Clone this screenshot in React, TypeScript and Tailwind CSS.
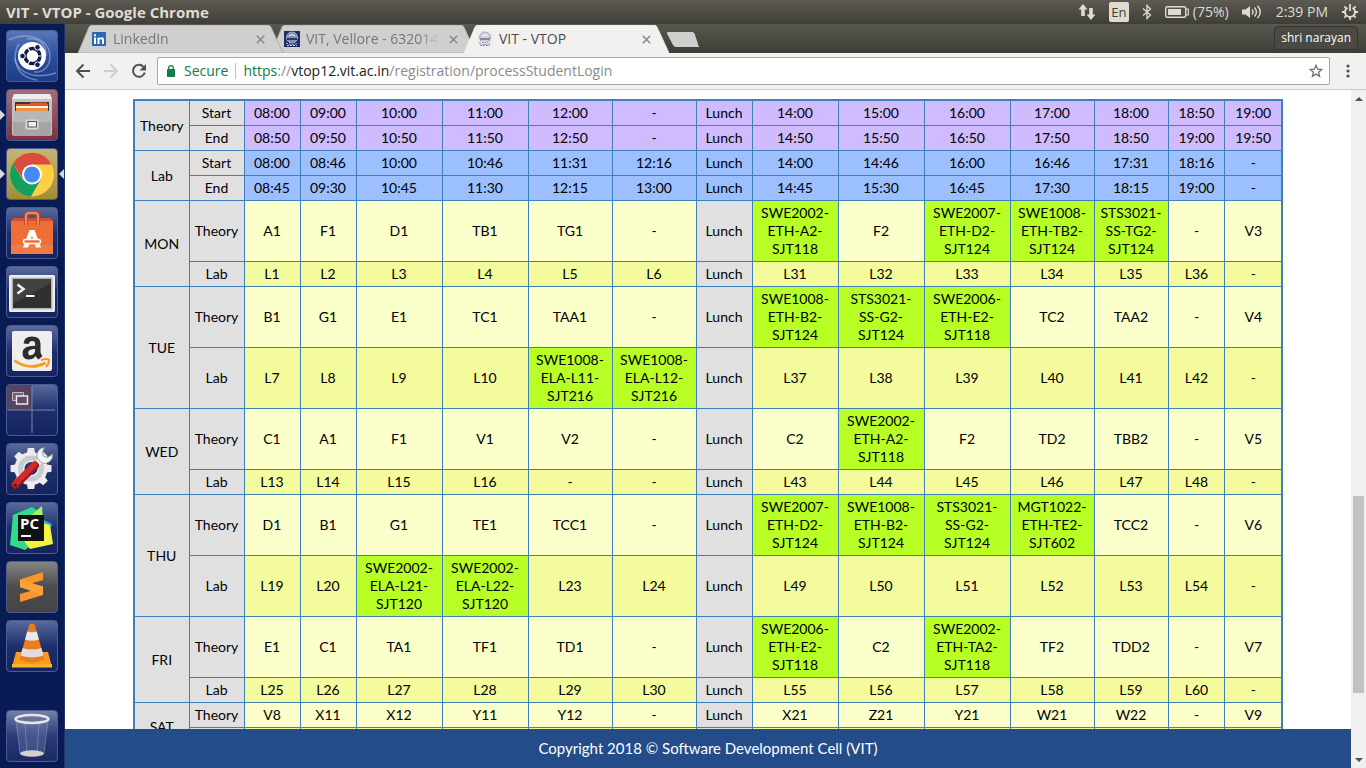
import React from 'react';

const UI = "font-['Open_Sans','Noto_Sans',sans-serif]";

type Slot = { text: string; booked?: boolean };

const parse = (row: string): Slot[] =>
  row.split(' ').map((text) => ({ text, booked: text.length > 8 }));

const BLANK_ROW = ' '.repeat(13);

const COLS = [55, 55, 56, 56, 86, 86, 84, 84, 56, 86, 86, 86, 84, 74, 57, 57];

const HEAD = [
  {
    name: 'Theory',
    tone: 'bg-[#cfbbff]',
    start: '08:00 09:00 10:00 11:00 12:00 - Lunch 14:00 15:00 16:00 17:00 18:00 18:50 19:00',
    end: '08:50 09:50 10:50 11:50 12:50 - Lunch 14:50 15:50 16:50 17:50 18:50 19:00 19:50',
  },
  {
    name: 'Lab',
    tone: 'bg-[#9cbfff]',
    start: '08:00 08:46 10:00 10:46 11:31 12:16 Lunch 14:00 14:46 16:00 16:46 17:31 18:16 -',
    end: '08:45 09:30 10:45 11:30 12:15 13:00 Lunch 14:45 15:30 16:45 17:30 18:15 19:00 -',
  },
];

const DAYS = [
  {
    name: 'MON',
    theory: 'A1 F1 D1 TB1 TG1 - Lunch SWE2002-ETH-A2-SJT118 F2 SWE2007-ETH-D2-SJT124 SWE1008-ETH-TB2-SJT124 STS3021-SS-TG2-SJT124 - V3',
    lab: 'L1 L2 L3 L4 L5 L6 Lunch L31 L32 L33 L34 L35 L36 -',
  },
  {
    name: 'TUE',
    theory: 'B1 G1 E1 TC1 TAA1 - Lunch SWE1008-ETH-B2-SJT124 STS3021-SS-G2-SJT124 SWE2006-ETH-E2-SJT118 TC2 TAA2 - V4',
    lab: 'L7 L8 L9 L10 SWE1008-ELA-L11-SJT216 SWE1008-ELA-L12-SJT216 Lunch L37 L38 L39 L40 L41 L42 -',
  },
  {
    name: 'WED',
    theory: 'C1 A1 F1 V1 V2 - Lunch C2 SWE2002-ETH-A2-SJT118 F2 TD2 TBB2 - V5',
    lab: 'L13 L14 L15 L16 - - Lunch L43 L44 L45 L46 L47 L48 -',
  },
  {
    name: 'THU',
    theory: 'D1 B1 G1 TE1 TCC1 - Lunch SWE2007-ETH-D2-SJT124 SWE1008-ETH-B2-SJT124 STS3021-SS-G2-SJT124 MGT1022-ETH-TE2-SJT602 TCC2 - V6',
    lab: 'L19 L20 SWE2002-ELA-L21-SJT120 SWE2002-ELA-L22-SJT120 L23 L24 Lunch L49 L50 L51 L52 L53 L54 -',
  },
  {
    name: 'FRI',
    theory: 'E1 C1 TA1 TF1 TD1 - Lunch SWE2006-ETH-E2-SJT118 C2 SWE2002-ETH-TA2-SJT118 TF2 TDD2 - V7',
    lab: 'L25 L26 L27 L28 L29 L30 Lunch L55 L56 L57 L58 L59 L60 -',
  },
  {
    name: 'SAT',
    theory: 'V8 X11 X12 Y11 Y12 - Lunch X21 Z21 Y21 W21 W22 - V9',
    lab: BLANK_ROW,
  },
];

const CELL = 'border border-[#3f7fbc] px-1 py-[3px] font-normal';

function Label({ text, span }: { text: string; span?: number }) {
  return (
    <th rowSpan={span} className={`${CELL} bg-[#e0e0e0]`}>
      {text}
    </th>
  );
}

function Slots({ row, tone, grayLunch }: { row: string; tone: string; grayLunch?: boolean }) {
  return (
    <>
      {parse(row).map((s, i) => {
        const bg = s.booked ? 'bg-[#b7ff24]' : grayLunch && i === 6 ? 'bg-[#e0e0e0]' : tone;
        const parts = s.text.split('-');
        return (
          <td key={i} className={`${CELL} ${bg}`}>
            {s.booked ? (
              <>
                {parts[0]}-<br />
                {parts[1]}-{parts[2]}-<br />
                {parts[3]}
              </>
            ) : (
              s.text
            )}
          </td>
        );
      })}
    </>
  );
}

function Timetable() {
  return (
    <table className="w-full table-fixed border-collapse border-2 border-[#3f7fbc] text-center text-sm/[18px] text-black">
      <colgroup>
        {COLS.map((w, i) => (
          <col key={i} style={{ width: `${(w / 1148) * 100}%` }} />
        ))}
      </colgroup>
      <tbody>
        {HEAD.map((h) => (
          <React.Fragment key={h.name}>
            <tr>
              <Label text={h.name} span={2} />
              <Label text="Start" />
              <Slots row={h.start} tone={h.tone} />
            </tr>
            <tr>
              <Label text="End" />
              <Slots row={h.end} tone={h.tone} />
            </tr>
          </React.Fragment>
        ))}
        {DAYS.map((d) => (
          <React.Fragment key={d.name}>
            <tr>
              <Label text={d.name} span={2} />
              <Label text="Theory" />
              <Slots row={d.theory} tone="bg-[#fbffc9]" grayLunch />
            </tr>
            <tr className="h-[25px]">
              <Label text={d.lab === BLANK_ROW ? '' : 'Lab'} />
              <Slots row={d.lab} tone="bg-[#f3fb9d]" grayLunch />
            </tr>
          </React.Fragment>
        ))}
      </tbody>
    </table>
  );
}

/* ---------- top panel ---------- */

function Panel() {
  return (
    <header className="flex h-6 shrink-0 items-center justify-between bg-linear-to-b from-[#5d5b53] to-[#3f3e39] pr-2 pl-[6px] text-[#dfdbd2]">
      <h1 className="text-[15px] font-bold">VIT - VTOP - Google Chrome</h1>
      <div className="flex items-center gap-[13px] text-sm">
        <svg width="18" height="16" viewBox="0 0 18 16" fill="#dfdbd2" aria-label="Network">
          <path d="M5 0 9.500 5.500H6.800V12H3.200V5.500H.500zM13 16 8.500 10.500H11.200V4H14.800V10.500H17.500z" />
        </svg>
        <span className="flex size-5 items-center justify-center rounded-xs bg-[#dfdbd2] text-[13px] text-[#3f3e39]">En</span>
        <svg width="10" height="16" viewBox="0 0 10 16" fill="none" stroke="#dfdbd2" strokeWidth="1.300" aria-label="Bluetooth">
          <path d="M1 4.500 8.500 11 5 14.500V1.500L8.500 5 1 11.500" />
        </svg>
        <span className="flex items-center gap-1">
          <svg width="24" height="12" viewBox="0 0 24 12" aria-label="Battery">
            <rect x=".7" y=".7" width="20" height="10.600" rx="1.500" fill="none" stroke="#dfdbd2" strokeWidth="1.400" />
            <rect x="3" y="3" width="13" height="6" fill="#dfdbd2" />
            <path d="M21 3h2.300v6H21" fill="none" stroke="#dfdbd2" strokeWidth="1.200" />
          </svg>
          (75%)
        </span>
        <svg width="20" height="14" viewBox="0 0 20 14" aria-label="Volume">
          <path d="M0 4.500h3.500L8 1v12L3.500 9.500H0z" fill="#dfdbd2" />
          <path d="M10 4.500q2 2.500 0 5M12.500 2.500q4 4.500 0 9M15.500.8q5.500 6.200 0 12.400" fill="none" stroke="#dfdbd2" strokeWidth="1.400" />
        </svg>
        <time className="px-px">2:39 PM</time>
        <svg width="16" height="16" viewBox="0 0 16 16" fill="none" stroke="#dfdbd2" aria-label="Session">
          <path d="M5.500 3.700a5 5 0 1 0 5 0" strokeWidth="1.900" />
          <path d="M8 0v7" strokeWidth="1.800" />
          <path d="M0 8h3M13 8h3M8 13v3M2.300 2.300l2 2M13.700 2.300l-2 2M2.300 13.700l2-2M13.700 13.700l-2-2" strokeWidth="1.800" />
        </svg>
      </div>
    </header>
  );
}

/* ---------- launcher ---------- */

const gloss = 'bg-linear-to-b from-[#5b6a9b] via-[#1e2f6d] to-[#15245f]';

function Tile({ label, tone, children, left, right }: { label: string; tone: string; children: React.ReactNode; left?: boolean; right?: boolean }) {
  return (
    <div className="relative flex w-full justify-center">
      {left && <span className="absolute top-[21px] left-0 border-y-[5px] border-l-[5px] border-y-transparent border-l-[#d8dade]" />}
      <button aria-label={label} className={`size-[52px] overflow-hidden rounded-sm border border-[#4c5c92] ${tone}`}>
        <svg width="50" height="50" viewBox="0 0 50 50">{children}</svg>
      </button>
      {right && <span className="absolute top-[21px] right-0 border-y-[5px] border-r-[5px] border-y-transparent border-r-[#d8dade]" />}
    </div>
  );
}

function GearTeeth() {
  return (
    <g fill="#ececec">
      {[0, 45, 90, 135, 180, 225, 270, 315].map((a) => (
        <path key={a} d="M19.500 12 20.800 4H27.200L28.500 12z" transform={`rotate(${a} 24 24.500)`} />
      ))}
    </g>
  );
}

function Launcher() {
  return (
    <nav aria-label="Launcher" className="flex w-[65px] shrink-0 flex-col gap-[7px] border-r border-[#24326a] bg-[#091b55] pt-[6px] pb-[6px]">
      <Tile label="Search" tone="bg-linear-to-b from-[#5a78b8] via-[#2b4f9d] to-[#1d3d88]">
        <g fill="none" stroke="#b6c6e8" strokeOpacity=".5" strokeWidth="1.500">
          <path d="M2 9C20 0 42 7 43 25 43 36 36 42 27 41" />
          <path d="M30 49C8 46 4 26 12 13" />
          <path d="M49 42C22 50 9 38 8 27" />
          <path d="M20 8C34 6 40 16 39 25" />
        </g>
        <circle cx="25" cy="25" r="14" fill="#fff" />
        <circle cx="25.500" cy="25" r="7.500" fill="none" stroke="#101b4a" strokeWidth="3.400" />
        <path d="M25.500 25 19 36.300M25.500 25 19 13.700M25.500 25H38" stroke="#fff" strokeWidth="1.200" />
        <circle cx="25.500" cy="25" r="5.600" fill="#fff" />
        <g fill="#101b4a" stroke="#fff" strokeWidth="1">
          <circle cx="15.500" cy="25" r="2.800" />
          <circle cx="30.500" cy="16.300" r="2.800" />
          <circle cx="30.500" cy="33.700" r="2.800" />
        </g>
      </Tile>
      <Tile label="Files" left tone="bg-linear-to-b from-[#a56c78] to-[#7f2f40]">
        <path d="M7 4h36l2 6v35H5V10z" fill="#c4c4c4" />
        <path d="M7 4h36l2 5H5z" fill="#ededed" />
        <path d="M8 12h34v9H8z" fill="#3b3531" />
        <path d="M23 12.500h17v4H23zM9 14h32v3H9z" fill="#d85c28" />
        <path d="M9 16h32v2H9z" fill="#fff0d7" />
        <path d="M9 18h32v3H9z" fill="#ef9145" />
        <path d="M6 21h38v25H6z" fill="#a5a5a5" />
        <path d="M6 21h38v11H6z" fill="#b7b7b7" />
        <rect x="18.500" y="29.500" width="13" height="10" rx="2" fill="#d7d7d7" stroke="#c6c6c6" />
        <rect x="21" y="31.500" width="8.500" height="5.500" fill="#eee" stroke="#555" />
      </Tile>
      <Tile label="Google Chrome" left right tone="bg-linear-to-b from-[#c2b676] to-[#a08e35]">
        <circle cx="25" cy="25.500" r="22" fill="#ffce43" />
        <path d="M25 25.500 34 30 24 47.500A22 22 0 0 1 6 14.500L16 31z" fill="#12a05d" />
        <path d="M25 25.500 16 30 6 14.500A22 22 0 0 1 44.500 15.500H25z" fill="#dc4b3f" />
        <circle cx="25" cy="25.500" r="10" fill="#fff" />
        <circle cx="25" cy="25.500" r="8" fill="#4688f4" />
      </Tile>
      <Tile label="Ubuntu Software" tone={gloss}>
        <path d="M4 13 6 10H44l2 3z" fill="#ce532d" />
        <path d="M4 13h42v33H4z" fill="#ee6e38" />
        <path d="M4 37h42v9H4z" fill="#f17c45" />
        <path d="M19 17V8q0-3 3-3h6q3 0 3 3v9" fill="none" stroke="#b84e32" strokeWidth="4" />
        <path d="M19 17V8q0-3 3-3h6q3 0 3 3v9" fill="none" stroke="#f2885b" strokeWidth="2" />
        <path d="M22.500 22h5L34 39.500h-5.200L25 27.500 21.200 39.500H16z" fill="#fff" />
        <rect x="16.500" y="31.500" width="17" height="4" rx="2" fill="#ee6e38" stroke="#fff" strokeWidth="1.500" />
      </Tile>
      <Tile label="Terminal" tone={gloss}>
        <rect x="2" y="8" width="46" height="37" rx="1.500" fill="#ededed" />
        <rect x="4.500" y="10.500" width="41" height="32" fill="#b5b5b5" />
        <rect x="6" y="12" width="38" height="29" fill="#302f30" />
        <path d="M6 12h38v4L6 37z" fill="#434243" />
        <path d="M10.500 17.500 16.500 22 10.500 26.500" fill="none" stroke="#eee" strokeWidth="2.600" />
        <path d="M19 29h8.500" stroke="#fff" strokeWidth="2.200" />
      </Tile>
      <Tile label="Amazon" tone={gloss}>
        <rect x="5" y="5" width="40" height="40" rx="2" fill="#eeeeee" />
        <path d="M16.500 17.500Q17 10.500 25 10.500 33.500 10.500 33.500 17.500V26Q33.500 28 35.500 30L31.500 33.500Q29.500 32 28.700 30 26 33.500 21.500 33.500 15.500 33 15.500 27 15.500 19.500 28.200 19.700V18Q28.200 15 25.200 15 22.300 15 21.800 18zM28.200 23Q21.200 23 21.200 26.700 21.200 29.300 23.700 29.300 28.200 29 28.200 23z" fill="#2d2d2d" fillRule="evenodd" />
        <path d="M7.500 34.500q14.500 10.500 31 2.500" fill="none" stroke="#f79a1c" strokeWidth="2.600" />
        <path d="M34 34q7-2 8 0 0 4-3 7" fill="none" stroke="#f79a1c" strokeWidth="2" />
      </Tile>
      <Tile label="Workspace Switcher" tone={gloss}>
        <path d="M0 0h25v25H0z" fill="#55445f" />
        <path d="M25 1v47M1 25h47" stroke="#7d86ab" strokeWidth="1" />
        <path d="M5.500 7.500h11v8h-11z" fill="#765f72" stroke="#bdb6c5" />
        <path d="M9.500 11h11v8h-11z" fill="#634c5f" stroke="#f0edf2" strokeWidth="1.400" />
      </Tile>
      <Tile label="System Settings" tone={gloss}>
        <GearTeeth />
        <circle cx="24" cy="24.500" r="11.500" fill="none" stroke="#ececec" strokeWidth="10" />
        <circle cx="24" cy="24.500" r="10.500" fill="none" stroke="#c9cad0" strokeWidth="5" />
        <path d="M28 22 36 14" stroke="#f1f1f1" strokeWidth="6" />
        <path d="M37.500 3.500A8 8 0 0 0 30 13.500L34 18.500A8 8 0 0 0 45.500 10L40.500 13.500 36.200 12 35.500 8z" fill="#f4f4f4" stroke="#8d8d8d" strokeWidth=".8" />
        <path d="M8.500 41 28 21.500" stroke="#96191b" strokeWidth="8" strokeLinecap="round" />
        <path d="M8 40 27.500 20.500" stroke="#d3292b" strokeWidth="5.500" strokeLinecap="round" />
        <circle cx="8.300" cy="41" r="1.600" fill="#5b1018" />
      </Tile>
      <Tile label="PyCharm" tone={gloss}>
        <path d="M6 12 25 4 36 11 30 38 18 47 3 42z" fill="#2fdc8c" />
        <path d="M22 14 35 3 36 20z" fill="#a7ef60" />
        <path d="M35 16 45 21 42 30 34 33z" fill="#17b5e8" />
        <path d="M36 20 43 22 46 41 23 46 17 38z" fill="#f5f33b" />
        <rect x="11" y="12" width="26" height="26" fill="#111" />
        <text x="13" y="26" fill="#fff" fontSize="15" fontWeight="700" fontFamily="Open Sans, sans-serif">PC</text>
        <path d="M14 33h10" stroke="#fff" strokeWidth="2" />
      </Tile>
      <Tile label="Sublime Text" tone="bg-linear-to-b from-[#858585] via-[#4c4c4c] to-[#444444]">
        <path d="M13 17.500 36 10V18L24 21.500 36 24.500V33L13 40V32L25 28.500 13 25z" fill="#f8962c" />
        <path d="M13 17.500 36 24.500V33L13 25z" fill="#ffa23a" />
      </Tile>
      <Tile label="VLC" tone={gloss}>
        <path d="M9 31H41L45 46H5z" fill="#fb9a1e" />
        <path d="M5 43H45V46.500H5z" fill="#ffb42e" />
        <path d="M22.300 3.500q2.700-2 5.400 0L37.500 38.500q-12.500 6-25 0z" fill="#ee7c1d" />
        <path d="M20.300 10.500q4.700 1.500 9.400 0l2.300 8q-7 2.500-14 0z" fill="#e6e8ea" />
        <path d="M15.700 27q9.300 3 18.600 0l2.200 7.500q-11.500 4-23 0z" fill="#dcdee2" />
      </Tile>
      <div className="grow" />
      <Tile label="Trash" tone="bg-linear-to-b from-[#7380aa] via-[#2b3a76] to-[#1c2b66]">
        <path d="M9 10H41L37 43q-12 4-24 0z" fill="#8091c5" fillOpacity=".3" />
        <path d="M9 10 13 42M41 10 37 42M18 13l2 28M32 13l-2 28" stroke="#b9c4df" strokeOpacity=".35" />
        <ellipse cx="25" cy="8" rx="16.500" ry="4" fill="#687397" stroke="#e5e6e6" strokeWidth="2.500" />
        <ellipse cx="25" cy="42.500" rx="12" ry="3.300" fill="#d0d1cf" />
      </Tile>
    </nav>
  );
}

/* ---------- browser chrome ---------- */

function Crest({ dark }: { dark?: boolean }) {
  const ink = dark ? '#27356f' : '#8587a0';
  return (
    <svg width="16" height="16" viewBox="0 0 16 16" className="shrink-0" aria-hidden="true">
      <rect width="16" height="16" fill={dark ? '#202c66' : '#eeeeee'} />
      <circle cx="8" cy="6.500" r="5.500" fill={dark ? '#8290b8' : '#d0d0dc'} stroke={dark ? '#d3daec' : ink} strokeDasharray="1.500 1" />
      <path d="M3 7h10v2H3z" fill={ink} />
      <path d="M5 5q3-3 6 0" stroke="#fff" fill="none" />
      <path d="M2 12q6 3 12 0M3 14.500h10" stroke={dark ? '#c0c9e3' : ink} fill="none" strokeDasharray="2 1" />
    </svg>
  );
}

function Tab({ title, icon, active, z }: { title: string; icon: React.ReactNode; active?: boolean; z: string }) {
  return (
    <div className={`relative -mr-3 h-7 w-[205px] ${z}`}>
      <svg className="absolute inset-0" width="205" height="28" viewBox="0 0 205 28" aria-hidden="true">
        <path d="M0 28 11 2Q12 0 14 0H190Q192 0 193 2L205 28z" fill={active ? '#f2f1f0' : '#d0cfcd'} stroke={active ? '#f2f1f0' : '#aaa9a6'} strokeWidth=".8" />
      </svg>
      <div role="tab" aria-selected={!!active} className={`relative flex h-full items-center gap-[6px] pr-[17px] pl-[13px] text-sm ${active ? 'text-[#4c4c4c]' : 'text-[#777777]'}`}>
        {icon}
        <span className={`min-w-0 flex-1 overflow-hidden whitespace-nowrap ${active ? '' : 'mask-r-from-85%'}`}>{title}</span>
        <button aria-label={`Close ${title}`} className="ml-[2px] flex size-3 items-center justify-center">
          <svg width="9" height="9" viewBox="0 0 9 9" stroke="#8b8a88" strokeWidth="1.600">
            <path d="M.8.8 8.200 8.200M8.200.8.800 8.200" />
          </svg>
        </button>
      </div>
    </div>
  );
}

function TabStrip() {
  return (
    <div className="flex h-[29px] shrink-0 items-end bg-linear-to-b from-[#59584f] to-[#3d3d37] pr-2 pl-[13px]">
      <div role="tablist" className="flex">
        <Tab
          title="LinkedIn"
          z="z-10"
          icon={
            <svg width="16" height="16" viewBox="0 0 16 16" className="shrink-0" aria-hidden="true">
              <rect x="1" y="1" width="14" height="14" rx="1" fill="#2867b2" />
              <path d="M3 6.500h2V13H3zM3 3.300h2v2H3zM6.500 6.500h2v1q1-1.200 2.300-1.200 2.200 0 2.200 2.700v4h-2V9.500q0-1.500-1.200-1.500-1.300 0-1.300 1.600V13h-2z" fill="#fff" />
            </svg>
          }
        />
        <Tab title="VIT, Vellore - 632014" z="z-0" icon={<Crest dark />} />
        <Tab title="VIT - VTOP" z="z-20" active icon={<Crest />} />
      </div>
      <button aria-label="New tab" className="mb-[5px] ml-[9px]">
        <svg width="34" height="16" viewBox="0 0 34 16">
          <path d="M2 0H26Q28 0 28.500 1.500L33 15H10Q8 15 7 13L1 1.500Q.500 0 2 0z" fill="#d0cfcd" />
        </svg>
      </button>
      <button className="mb-[3px] ml-auto h-6 rounded-sm border border-[#35342f] bg-[#4a4943] px-[6px] text-xs text-white">shri narayan</button>
    </div>
  );
}

function Toolbar() {
  return (
    <div className="flex h-[37px] shrink-0 items-center border-b border-[#c9c8c7] bg-[#f2f1f0] pr-4 pl-[10px]">
      <div className="flex shrink-0 gap-3">
        <button aria-label="Back">
          <svg width="16" height="16" viewBox="0 0 16 16" fill="none" stroke="#505050" strokeWidth="2">
            <path d="M15 8H2M8.500 1.500 2 8l6.500 6.500" />
          </svg>
        </button>
        <button aria-label="Forward">
          <svg width="16" height="16" viewBox="0 0 16 16" fill="none" stroke="#cfcecd" strokeWidth="2">
            <path d="M1 8h13M7.500 1.500 14 8l-6.500 6.500" />
          </svg>
        </button>
        <button aria-label="Reload">
          <svg width="16" height="16" viewBox="0 0 16 16">
            <path d="M13.800 9.500A6 6 0 1 1 12.500 3.800" fill="none" stroke="#505050" strokeWidth="2" />
            <path d="M15 1v6.500H8.500z" fill="#505050" />
          </svg>
        </button>
      </div>
      <div className="ml-[10px] flex h-7 flex-1 items-center rounded-xs border border-[#a9a8a7] bg-white px-[9px] text-sm">
        <svg width="8" height="12" viewBox="0 0 8 12" aria-hidden="true">
          <rect y="4" width="8" height="8" rx=".8" fill="#0b8043" />
          <path d="M1.700 5V3a2.300 2.300 0 0 1 4.600 0v2" fill="none" stroke="#0b8043" strokeWidth="1.300" />
        </svg>
        <span className="ml-[9px] text-[#0b8043]">Secure</span>
        <span className="mx-[7px] h-4 border-l border-[#bfbfbf]" />
        <label className="relative flex-1">
          <span aria-hidden="true" className="text-[#8a8a8a]">
            <span className="text-[#0b8043]">https</span>://<span className="text-[#222222]">vtop12.vit.ac.in</span>/registration/processStudentLogin
          </span>
          <input
            aria-label="Address"
            defaultValue="https://vtop12.vit.ac.in/registration/processStudentLogin"
            className="absolute inset-0 w-full bg-transparent text-transparent outline-none"
          />
        </label>
        <button aria-label="Bookmark this page" className="-mr-[3px]">
          <svg width="14" height="14" viewBox="0 0 14 14" fill="none" stroke="#707070" strokeWidth="1.300">
            <path d="M7 1.300 8.600 5.200 12.800 5.500 9.600 8.200 10.600 12.400 7 10.100 3.400 12.400 4.400 8.200 1.200 5.500 5.400 5.200z" />
          </svg>
        </button>
      </div>
      <button aria-label="Menu" className="ml-4">
        <svg width="4" height="14" viewBox="0 0 4 14" fill="#505050">
          <circle cx="2" cy="2" r="1.600" />
          <circle cx="2" cy="7" r="1.600" />
          <circle cx="2" cy="12" r="1.600" />
        </svg>
      </button>
    </div>
  );
}

function Scrollbar() {
  return (
    <div aria-hidden="true" className="flex w-[15px] shrink-0 flex-col items-center bg-[#f0f0f0]">
      <span className="flex h-[17px] items-center">
        <svg width="8" height="4" viewBox="0 0 8 4" fill="#505050">
          <path d="M4 0 8 4H0z" />
        </svg>
      </span>
      <span className="grow-[389] basis-0" />
      <span className="w-[11px] grow-[197] basis-0 bg-[#c1c1c1]" />
      <span className="grow-[58] basis-0" />
      <span className="flex h-[17px] items-center">
        <svg width="8" height="4" viewBox="0 0 8 4" fill="#505050">
          <path d="M0 0H8L4 4z" />
        </svg>
      </span>
    </div>
  );
}

export default function App() {
  return (
    <div className={`flex h-screen flex-col overflow-hidden bg-white ${UI}`}>
      <Panel />
      <div className="flex min-h-0 flex-1">
        <Launcher />
        <div className="flex min-w-0 flex-1 flex-col">
          <TabStrip />
          <Toolbar />
          <div className="flex min-h-0 flex-1">
            <div className="flex min-w-0 flex-1 flex-col font-[Lato,sans-serif]">
              <main className="min-h-0 flex-1 overflow-hidden px-[68px] pt-[9px]">
                <Timetable />
              </main>
              <footer className="flex h-[39px] shrink-0 items-center justify-center bg-[#234c88] text-[15px] text-white">
                Copyright 2018 © Software Development Cell (VIT)
              </footer>
            </div>
            <Scrollbar />
          </div>
        </div>
      </div>
    </div>
  );
}
